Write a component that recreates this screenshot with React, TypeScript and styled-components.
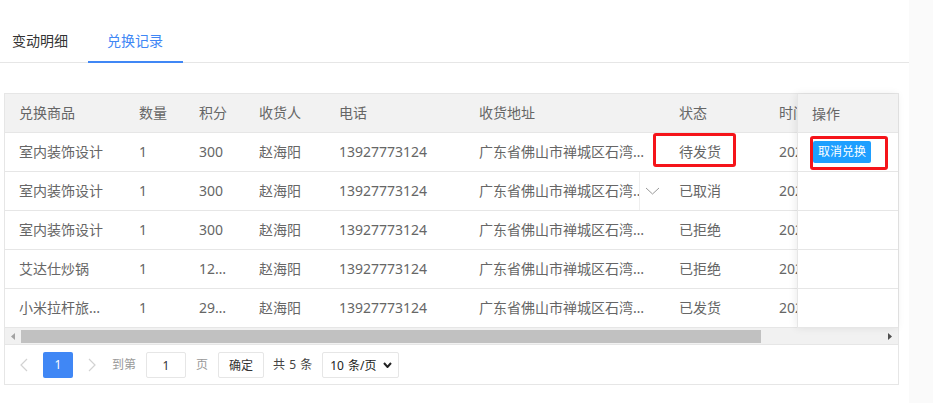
import React from "react";
import styled, { createGlobalStyle, css } from "styled-components";

const GlobalStyle = createGlobalStyle`
  html, body { margin: 0; padding: 0; background: #fff; }
  body {
    font-family: "Noto Sans", "Noto Sans CJK SC", sans-serif;
    font-size: 14px;
    color: #666;
  }
  * { box-sizing: border-box; }
`;

const BLUE = "#4087f5";
const LINE = "#e6e6e6";

const Page = styled.div`
  display: flex;
  width: 933px;
  min-height: 403px;
`;

const Main = styled.main`
  width: 909px;
  background: #fff;
`;

const Side = styled.aside`
  flex: 1;
  background: #fafafa;
`;

const TabBar = styled.div`
  display: flex;
  padding-top: 20px;
  border-bottom: 1px solid ${LINE};
`;

const Tab = styled.div<{ $active?: boolean; $first?: boolean }>`
  position: relative;
  height: 42px;
  line-height: 41px;
  padding: 0 20px 0 ${(p) => (p.$first ? 12 : 19)}px;
  font-size: 14px;
  color: ${(p) => (p.$active ? BLUE : "#333")};
  ${(p) =>
    p.$active &&
    css`
      &::after {
        content: "";
        position: absolute;
        left: 0;
        right: 0;
        bottom: -1px;
        height: 2px;
        background: ${BLUE};
      }
    `}
`;

const TableBox = styled.section`
  width: 895px;
  margin: 30px 0 0 4px;
  border: 1px solid ${LINE};
`;

const Body = styled.div`
  display: flex;
`;

const ScrollArea = styled.div`
  flex: 1;
  min-width: 0;
  overflow: hidden;
`;

const Inner = styled.div`
  width: 940px;
`;

const Row = styled.div<{ $head?: boolean }>`
  display: grid;
  grid-template-columns: 120px 60px 60px 80px 140px 200px 100px 180px;
  height: 39px;
  border-bottom: 1px solid ${LINE};
  background: ${(p) => (p.$head ? "#f2f2f2" : "#fff")};
`;

const Cell = styled.div`
  position: relative;
  min-width: 0;
  height: 38px;
  padding: 0 14px;
  display: flex;
  align-items: center;
`;

const CellText = styled.span`
  display: block;
  width: 100%;
  line-height: 28px;
  white-space: nowrap;
  overflow: hidden;
  text-overflow: ellipsis;
  color: #666;
`;

const GridDown = styled.div`
  position: absolute;
  top: 0;
  right: 0;
  bottom: 0;
  width: 26px;
  border-left: 1px solid #eee;
  background: #fff;
  display: flex;
  align-items: center;
  justify-content: center;
  color: #999;
`;

const Mark = styled.div<{ $l: number; $t: number; $w: number; $h: number }>`
  position: absolute;
  left: ${(p) => p.$l}px;
  top: ${(p) => p.$t}px;
  width: ${(p) => p.$w}px;
  height: ${(p) => p.$h}px;
  border: 3px solid #f5141a;
  border-radius: 3px;
  pointer-events: none;
`;

const FixedCol = styled.div`
  position: relative;
  z-index: 1;
  width: 101px;
  border-left: 1px solid ${LINE};
  background: #fff;
  box-shadow: -1px 0 8px rgba(0, 0, 0, 0.08);
`;

const FixedCell = styled.div<{ $head?: boolean }>`
  position: relative;
  height: 39px;
  padding-left: 14px;
  display: flex;
  align-items: center;
  border-bottom: 1px solid ${LINE};
  background: ${(p) => (p.$head ? "#f2f2f2" : "#fff")};
  color: #666;
`;

const CancelBtn = styled.button`
  height: 22px;
  line-height: 22px;
  margin-left: 1px;
  padding: 0 5px;
  border: none;
  border-radius: 2px;
  background: #1e9fff;
  color: #fff;
  font-family: inherit;
  font-size: 12px;
`;

const Scrollbar = styled.div`
  display: flex;
  height: 16px;
  background: #f1f1f1;
`;

const ScrollArrow = styled.div`
  width: 16px;
  display: flex;
  align-items: center;
  justify-content: center;
`;

const Track = styled.div`
  flex: 1;
  padding: 2px 0 1px;
`;

const Thumb = styled.div`
  width: 740px;
  height: 13px;
  background: #c1c1c1;
`;

const Pager = styled.div`
  display: flex;
  align-items: center;
  border-top: 1px solid ${LINE};
  padding: 7px 0 6px 15px;
  font-size: 12px;
`;

const PagerArrow = styled.span<{ $before: number; $after: number }>`
  display: flex;
  align-items: center;
  margin: 0 ${(p) => p.$after}px 0 ${(p) => p.$before}px;
`;

const Current = styled.span`
  width: 30px;
  height: 26px;
  line-height: 26px;
  text-align: center;
  border-radius: 2px;
  background: ${BLUE};
  color: #fff;
`;

const Label = styled.span<{ $ml: number; $color?: string }>`
  margin-left: ${(p) => p.$ml}px;
  color: ${(p) => p.$color || "#999"};
  line-height: 26px;
  white-space: pre;
  word-spacing: 1px;
`;

const SkipInput = styled.input`
  width: 40px;
  height: 26px;
  margin-left: 10px;
  padding: 0;
  border: 1px solid ${LINE};
  border-radius: 2px;
  text-align: center;
  font-family: inherit;
  font-size: 12px;
  color: #333;
  outline: none;
`;

const ConfirmBtn = styled.button`
  width: 46px;
  height: 26px;
  margin-left: 10px;
  padding: 0;
  border: 1px solid ${LINE};
  border-radius: 2px;
  background: #fff;
  font-family: inherit;
  font-size: 12px;
  color: #333;
`;

const SizeSelect = styled.div`
  display: flex;
  align-items: center;
  justify-content: space-between;
  width: 77px;
  height: 26px;
  margin-left: 10px;
  padding: 0 6px 0 7px;
  border: 1px solid ${LINE};
  border-radius: 2px;
  color: #222;
  font-size: 12px;
  word-spacing: 1px;
`;

const Chevron = ({ w, h, color, sw, dir }: { w: number; h: number; color: string; sw: number; dir: "down" | "left" | "right" }) => {
  const d =
    dir === "down"
      ? `M1 1 L${w / 2} ${h - 1} L${w - 1} 1`
      : dir === "left"
      ? `M${w - 1} 1 L1 ${h / 2} L${w - 1} ${h - 1}`
      : `M1 1 L${w - 1} ${h / 2} L1 ${h - 1}`;
  return (
    <svg width={w} height={h} viewBox={`0 0 ${w} ${h}`}>
      <path d={d} fill="none" stroke={color} strokeWidth={sw} />
    </svg>
  );
};

const Tri = ({ dir, color }: { dir: "left" | "right"; color: string }) => (
  <svg width="4" height="7" viewBox="0 0 4 7">
    <path d={dir === "left" ? "M4 0 L0 3.5 L4 7 Z" : "M0 0 L4 3.5 L0 7 Z"} fill={color} />
  </svg>
);

const ADDRESS = "广东省佛山市禅城区石湾镇街道美术陶瓷厂";

type Rec = { name: string; qty: string; pts: string; who: string; tel: string; addr: string; status: string; time: string };

const rows: Rec[] = [
  { name: "室内装饰设计", qty: "1", pts: "300", who: "赵海阳", tel: "13927773124", addr: ADDRESS, status: "待发货", time: "2023-06-12 10:30:25" },
  { name: "室内装饰设计", qty: "1", pts: "300", who: "赵海阳", tel: "13927773124", addr: ADDRESS, status: "已取消", time: "2023-06-10 09:12:40" },
  { name: "室内装饰设计", qty: "1", pts: "300", who: "赵海阳", tel: "13927773124", addr: ADDRESS, status: "已拒绝", time: "2023-06-08 16:45:03" },
  { name: "艾达仕炒锅", qty: "1", pts: "1299", who: "赵海阳", tel: "13927773124", addr: ADDRESS, status: "已拒绝", time: "2023-06-05 14:20:11" },
  { name: "小米拉杆旅行箱", qty: "1", pts: "2999", who: "赵海阳", tel: "13927773124", addr: ADDRESS, status: "已发货", time: "2023-06-01 11:08:57" },
];

const heads = ["兑换商品", "数量", "积分", "收货人", "电话", "收货地址", "状态", "时间"];

export default function App() {
  return (
    <>
      <GlobalStyle />
      <Page>
        <Main>
          <TabBar>
            <Tab $first>变动明细</Tab>
            <Tab $active>兑换记录</Tab>
          </TabBar>
          <TableBox>
            <Body>
              <ScrollArea>
                <Inner>
                  <Row $head>
                    {heads.map((h) => (
                      <Cell key={h}>
                        <CellText>{h}</CellText>
                      </Cell>
                    ))}
                  </Row>
                  {rows.map((r, i) => (
                    <Row key={i}>
                      <Cell><CellText>{r.name}</CellText></Cell>
                      <Cell><CellText>{r.qty}</CellText></Cell>
                      <Cell><CellText>{r.pts}</CellText></Cell>
                      <Cell><CellText>{r.who}</CellText></Cell>
                      <Cell><CellText>{r.tel}</CellText></Cell>
                      <Cell>
                        <CellText>{r.addr}</CellText>
                        {i === 1 && (
                          <GridDown>
                            <Chevron w={15} h={8} color="#999" sw={1} dir="down" />
                          </GridDown>
                        )}
                      </Cell>
                      <Cell>
                        <CellText>{r.status}</CellText>
                        {i === 0 && <Mark $l={-12} $t={0} $w={83} $h={34} />}
                      </Cell>
                      <Cell><CellText>{r.time}</CellText></Cell>
                    </Row>
                  ))}
                </Inner>
              </ScrollArea>
              <FixedCol>
                <FixedCell $head>操作</FixedCell>
                {rows.map((r, i) => (
                  <FixedCell key={i}>
                    {i === 0 && (
                      <>
                        <CancelBtn>取消兑换</CancelBtn>
                        <Mark $l={12} $t={3} $w={78} $h={34} />
                      </>
                    )}
                  </FixedCell>
                ))}
              </FixedCol>
            </Body>
            <Scrollbar>
              <ScrollArrow><Tri dir="left" color="#a3a3a3" /></ScrollArrow>
              <Track><Thumb /></Track>
              <ScrollArrow><Tri dir="right" color="#505050" /></ScrollArrow>
            </Scrollbar>
            <Pager>
              <PagerArrow $before={0} $after={15}>
                <Chevron w={8} h={14} color="#d2d2d2" sw={1.2} dir="left" />
              </PagerArrow>
              <Current>1</Current>
              <PagerArrow $before={15} $after={16}>
                <Chevron w={8} h={14} color="#d2d2d2" sw={1.2} dir="right" />
              </PagerArrow>
              <Label $ml={0}>到第</Label>
              <SkipInput defaultValue="1" />
              <Label $ml={10}>页</Label>
              <ConfirmBtn>确定</ConfirmBtn>
              <Label $ml={9} $color="#444">共 5 条</Label>
              <SizeSelect>
                <span>10 条/页</span>
                <Chevron w={9} h={6} color="#222" sw={2} dir="down" />
              </SizeSelect>
            </Pager>
          </TableBox>
        </Main>
        <Side />
      </Page>
    </>
  );
}
